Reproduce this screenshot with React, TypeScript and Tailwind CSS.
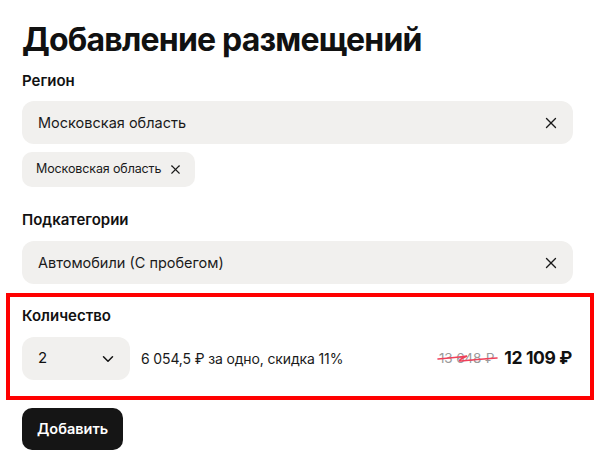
import { X, ChevronDown } from "lucide-react";

const font = { fontFamily: "Inter, 'Noto Sans', sans-serif" };

function Field({ value }: { value: string }) {
    return (
        <div className="flex h-[43px] items-center justify-between rounded-xl bg-[#f1f0ee] pl-4 pr-[13px]">
            <span className="text-[14.5px] text-[#1a1a1a]">{value}</span>
            <X size={18} strokeWidth={1.8} className="text-[#1a1a1a]" />
        </div>
    );
}

export default function App() {
    return (
        <div className="min-h-screen bg-white text-[#111]" style={font}>
            <div className="pl-[22px] pr-[27px] pt-[20px]">
                <h1 className="text-[32px] font-bold leading-[40px] tracking-[-0.025em]">
                    Добавление размещений
                </h1>

                <div className="mt-[11px] text-[15px] font-semibold leading-5">Регион</div>
                <div className="mt-[10px]">
                    <Field value="Московская область" />
                </div>
                <div className="mt-[8px] flex">
                    <div className="flex h-[35px] items-center gap-[7px] rounded-[10px] bg-[#f1f0ee] pl-[14px] pr-[12px]">
                        <span className="text-[12.5px] tracking-[-0.01em] text-[#1a1a1a]">Московская область</span>
                        <X size={15} strokeWidth={1.8} className="text-[#1a1a1a]" />
                    </div>
                </div>

                <div className="mt-[23px] text-[15px] font-semibold leading-5">Подкатегории</div>
                <div className="mt-[11px]">
                    <Field value="Автомобили (С пробегом)" />
                </div>
            </div>

            <div className="mx-[6px] mt-[9px] border-4 border-[#ff0000] pb-[16px] pl-[12px] pr-[18px] pt-[9px]">
                <div className="text-[15px] font-semibold leading-5">Количество</div>
                <div className="mt-[11px] flex items-center">
                    <div className="flex h-[43px] w-[108px] items-center justify-between rounded-xl bg-[#f1f0ee] pl-4 pr-[13px]">
                        <span className="text-[15px]">2</span>
                        <ChevronDown size={18} strokeWidth={2} />
                    </div>
                    <span className="ml-[11px] text-[14px] tracking-[-0.01em] text-[#1a1a1a]">
                        6 054,5 ₽ за одно, скидка 11%
                    </span>
                    <div className="ml-auto flex items-center gap-[10px]">
                        <span className="relative text-[13.5px] tracking-[-0.01em] text-[#9a9a9a]">
                            13 648 ₽
                            <svg
                                className="absolute left-[-2px] top-[2px]"
                                width="62"
                                height="16"
                                viewBox="0 0 62 16"
                                fill="none"
                            >
                                <path
                                    d="M1 9 C 12 8, 22 7, 30 6 C 24 9, 20 11, 24 11 C 34 10, 46 9, 60 8"
                                    stroke="#f0405a"
                                    strokeWidth="1.6"
                                    strokeLinecap="round"
                                />
                            </svg>
                        </span>
                        <span className="text-[17.5px] font-bold tracking-[-0.02em]">12 109 ₽</span>
                    </div>
                </div>
            </div>

            <div className="px-[22px] pt-[8px]">
                <button className="h-[42px] rounded-[10px] bg-[#151515] px-[15px] text-[14.5px] font-semibold text-white">
                    Добавить
                </button>
            </div>
        </div>
    );
}
